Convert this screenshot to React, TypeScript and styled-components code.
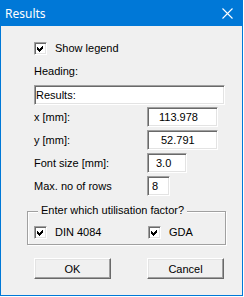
import { Fragment } from 'react';
import styled, { createGlobalStyle } from 'styled-components';

const Global = createGlobalStyle`
  html, body {
    margin: 0;
    padding: 0;
    background: #ffffff;
  }
  body {
    font-family: "Liberation Sans", Arial, sans-serif;
    font-size: 11px;
    color: #000;
  }
`;

const Window = styled.div`
  width: 243px;
  height: 296px;
  box-sizing: border-box;
  background: #0078d7;
  padding: 0 1px 1px 1px;
  display: flex;
  flex-direction: column;
`;

const TitleBar = styled.div`
  height: 26px;
  flex: none;
  display: flex;
  align-items: center;
  padding: 0 9px 0 4px;
  color: #fff;
  font-family: "Noto Sans", "Open Sans", sans-serif;
  font-size: 12px;
  .title {
    flex: 1;
  }
`;

const Body = styled.div`
  flex: 1;
  background: #f0f0f0;
  padding: 16px 0 0 33px;
  display: flex;
  flex-direction: column;
  align-items: flex-start;
`;

const CheckRow = styled.label`
  display: flex;
  align-items: center;
  gap: 8px;
  height: 13px;
  line-height: 13px;
  white-space: nowrap;
`;

const Box = styled.span`
  width: 13px;
  height: 13px;
  box-sizing: border-box;
  background: #fff;
  border: 1px solid;
  border-color: #a0a0a0 #fff #fff #a0a0a0;
  box-shadow: inset 1px 1px 0 #696969, inset -1px -1px 0 #e3e3e3;
  display: flex;
  align-items: center;
  justify-content: center;
  svg {
    display: block;
  }
`;

const Label = styled.div<{ top?: number }>`
  height: 13px;
  line-height: 13px;
  margin-top: ${(p) => p.top ?? 0}px;
  white-space: nowrap;
`;

const Field = styled.input<{ w: number; pad: number; top?: number }>`
  width: ${(p) => p.w}px;
  height: 20px;
  box-sizing: border-box;
  margin: ${(p) => p.top ?? 0}px 0 0 0;
  padding: 0 0 0 ${(p) => p.pad}px;
  font: inherit;
  color: #000;
  background: #fff;
  border: 1px solid;
  border-color: #a0a0a0 #fff #fff #a0a0a0;
  box-shadow: inset 1px 1px 0 #696969, inset -1px -1px 0 #e3e3e3;
  outline: none;
  border-radius: 0;
`;

const FieldGrid = styled.div`
  margin-top: 2px;
  display: grid;
  grid-template-columns: 113px auto;
  grid-auto-rows: 20px;
  row-gap: 3px;
  align-items: center;
`;

const GroupBox = styled.div`
  position: relative;
  margin: 15px 0 0 -7px;
  width: 199px;
  height: 34px;
  box-sizing: border-box;
  border: 1px solid #a0a0a0;
  box-shadow: inset 1px 1px 0 #fff, 1px 1px 0 #fff;
  padding: 14px 0 0 6px;
  display: grid;
  grid-template-columns: 114px auto;
`;

const Legend = styled.span`
  position: absolute;
  left: 10px;
  top: -8px;
  padding: 0 3px;
  background: #f0f0f0;
  line-height: 13px;
  white-space: nowrap;
`;

const ButtonRow = styled.div`
  margin-top: 13px;
  display: flex;
  gap: 36px;
`;

const Button = styled.button`
  width: 77px;
  height: 21px;
  box-sizing: border-box;
  padding: 0;
  font: inherit;
  color: #000;
  background: #f0f0f0;
  border: 1px solid;
  border-color: #fff #696969 #696969 #fff;
  box-shadow: inset -1px -1px 0 #a0a0a0, inset 1px 1px 0 #e3e3e3;
  border-radius: 0;
`;

const Check = ({ label }: { label: string }) => (
  <CheckRow>
    <Box>
      <svg width="9" height="9" viewBox="0 0 9 9" shapeRendering="crispEdges">
        <path d="M1 3 L3 5 L7 1 L7 4 L3 8 L1 6 Z" fill="#000" />
      </svg>
    </Box>
    {label}
  </CheckRow>
);

const CloseIcon = () => (
  <svg width="11" height="11" viewBox="0 0 11 11">
    <path d="M0.5 0.5 L10.5 10.5 M10.5 0.5 L0.5 10.5" stroke="#fff" strokeWidth="1.1" />
  </svg>
);

const rows = [
  { label: 'x [mm]:', value: '113.978', w: 71, pad: 11 },
  { label: 'y [mm]:', value: '52.791', w: 71, pad: 13 },
  { label: 'Font size [mm]:', value: '3.0', w: 40, pad: 8 },
  { label: 'Max. no of rows', value: '8', w: 23, pad: 4 },
];

export default function App() {
  return (
    <>
      <Global />
      <Window>
        <TitleBar>
          <span className="title">Results</span>
          <CloseIcon />
        </TitleBar>
        <Body>
          <Check label="Show legend" />
          <Label top={10}>Heading:</Label>
          <Field w={191} pad={1} top={7} value="Results:" readOnly />
          <FieldGrid>
            {rows.map((r) => (
              <Fragment key={r.label}>
                <Label>{r.label}</Label>
                <Field w={r.w} pad={r.pad} value={r.value} readOnly />
              </Fragment>
            ))}
          </FieldGrid>
          <GroupBox>
            <Legend>Enter which utilisation factor?</Legend>
            <Check label="DIN 4084" />
            <Check label="GDA" />
          </GroupBox>
          <ButtonRow>
            <Button>OK</Button>
            <Button>Cancel</Button>
          </ButtonRow>
        </Body>
      </Window>
    </>
  );
}
